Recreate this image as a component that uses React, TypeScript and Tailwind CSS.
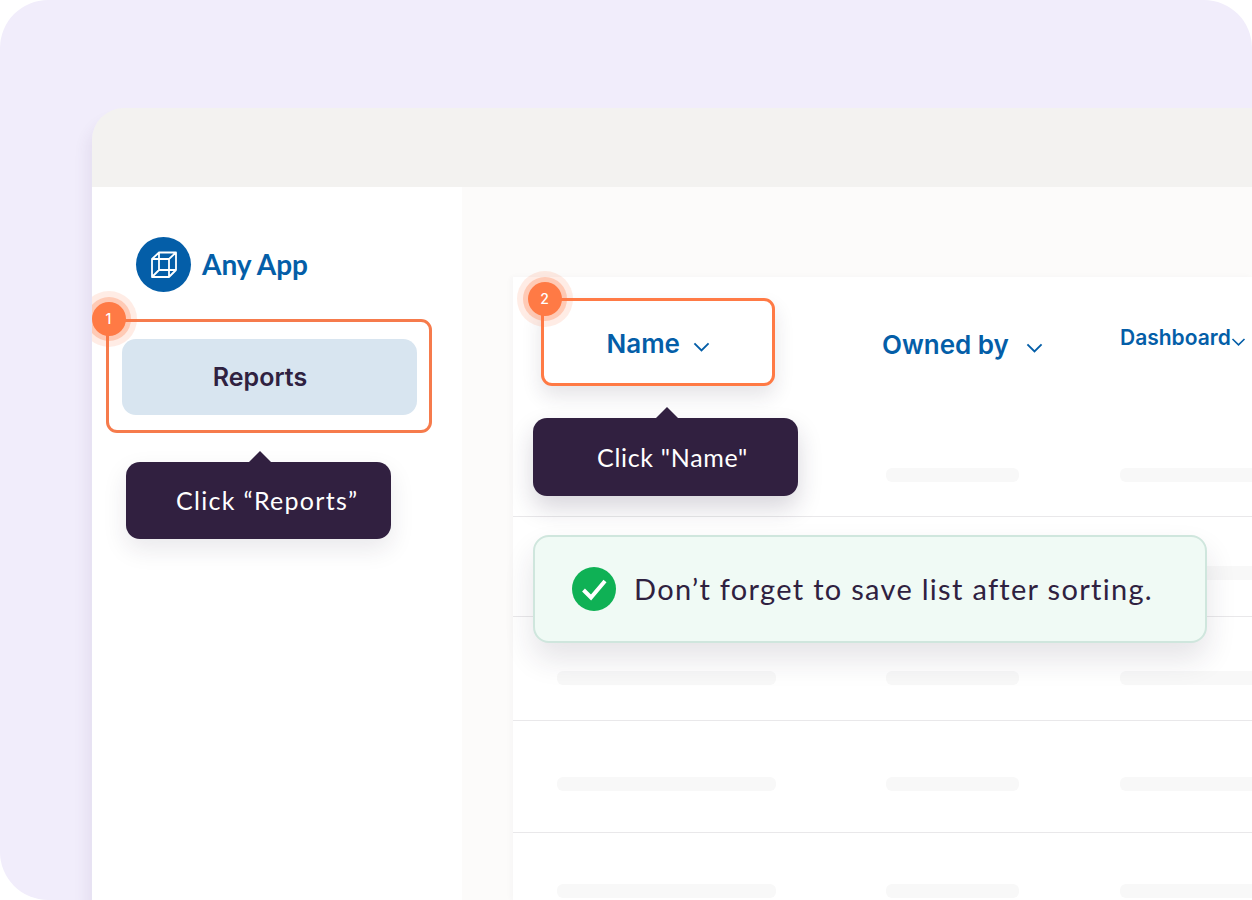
const rows = [
  { height: 'h-[104px]', top: 'pt-[56px]', first: false },
  { height: 'h-[100px]', top: 'pt-[49px]', first: true },
  { height: 'h-[104px]', top: 'pt-[54px]', first: true },
  { height: 'h-[112px]', top: 'pt-[56px]', first: true },
  { height: 'h-[68px]', top: 'pt-[51px]', first: true },
];

function Badge({ n, className }: { n: number; className: string }) {
  return (
    <div
      className={`absolute flex h-[34px] w-[34px] items-center justify-center rounded-full bg-[#ff7a45] text-[14px] font-medium text-white shadow-[0_0_0_5px_rgba(255,122,69,0.3),0_0_0_11px_rgba(255,122,69,0.14)] ${className}`}
    >
      {n}
    </div>
  );
}

function Tooltip({ text, className }: { text: string; className: string }) {
  return (
    <div
      className={`flex w-[265px] items-center rounded-[14px] bg-[#312040] font-['Lato',sans-serif] text-[25px] text-white ${className}`}
    >
      <span className="absolute left-[122px] top-[-11px] h-0 w-0 border-x-[12px] border-b-[12px] border-x-transparent border-b-[#312040]" />
      {text}
    </div>
  );
}

function Chevron({ className }: { className: string }) {
  return (
    <svg viewBox="0 0 18 10" fill="none" stroke="#045ea8" strokeWidth="2" className={className}>
      <path d="M1.5 1.2 9 8.6l7.5-7.4" />
    </svg>
  );
}

export default function App() {
  return (
    <div className="h-[900px] w-[1252px] overflow-hidden bg-white font-['Inter',sans-serif]">
      <div className="h-full rounded-[48px] bg-[#f1edfb] pl-[92px] pt-[108px]">
        <div className="flex h-[792px] flex-col overflow-hidden rounded-tl-[32px] shadow-[-6px_12px_14px_rgba(80,60,120,0.07)]">
          <div className="h-[79px] shrink-0 bg-[#f3f2f0]" />
          <div className="flex flex-1">
            {/* sidebar */}
            <div className="w-[370px] shrink-0 bg-white pl-[14px] pt-[50px]">
              <div className="ml-[30px] flex items-center gap-[11px]">
                <div className="flex h-[55px] w-[55px] items-center justify-center rounded-full bg-[#045ea8]">
                  <svg viewBox="0 0 28 28" fill="none" stroke="white" strokeWidth="1.8" strokeLinejoin="round" className="h-[28px] w-[28px]">
                    <path d="M2 8h17v18H2zM9 1.500h17V19H9zM2 8l7-6.500M19 8l7-6.500M19 26l7-7M2 26l7-7" />
                  </svg>
                </div>
                <span className="mb-[2px] font-['Lato',sans-serif] text-[28px] font-bold text-[#045ea8]">Any App</span>
              </div>
              <div className="relative mt-[27px] h-[114px] w-[326px] rounded-[11px] border-[3.5px] border-[#f67b4c] px-[12.5px] pt-[16.5px]">
                <Badge n={1} className="left-[-17.5px] top-[-20.5px]" />
                <div className="flex h-[76px] items-center justify-center rounded-[14px] bg-[#d8e5f0] pr-[18px] pt-[2px] text-[25px] font-semibold text-[#2f2140]">
                  Reports
                </div>
              </div>
              <Tooltip
                text="Click “Reports”"
                className="relative ml-[20px] mt-[29px] h-[77px] pl-[50px] pt-[1px] tracking-[1.3px] shadow-[0_10px_24px_rgba(40,30,60,0.1)]"
              />
            </div>

            {/* list */}
            <div className="flex-1 bg-[#fcfbfa] pl-[51px] pt-[90px]">
              <div className="relative h-full bg-white shadow-[-2px_0_6px_rgba(60,50,80,0.03)]">
                <div className="flex h-[135px] items-start pl-[28px] pt-[21px] text-[#045ea8]">
                  <div className="relative flex h-[88px] w-[234px] shrink-0 items-center rounded-[11px] border-[3.5px] border-[#ff7a45] bg-white pl-[62.5px] pt-[2px] shadow-[0_10px_20px_rgba(40,30,60,0.12)]">
                    <Badge n={2} className="left-[-16.5px] top-[-19.5px]" />
                    <span className="text-[26px] font-semibold">Name</span>
                    <Chevron className="ml-[13px] mt-[7px] h-[10px] w-[17px]" />
                  </div>
                  <div className="ml-[107px] mt-[27px] flex w-[238px] shrink-0 items-center">
                    <span className="text-[26px] font-semibold">Owned by</span>
                    <Chevron className="ml-[17px] mt-[6px] h-[10px] w-[17px]" />
                  </div>
                  <div className="mt-[24px] flex items-center">
                    <span className="text-[21px] font-semibold">Dashboard</span>
                    <Chevron className="mt-[8px] h-[8px] w-[15px]" />
                  </div>
                </div>

                {rows.map((row, i) => (
                  <div
                    key={i}
                    className={`grid grid-cols-[329px_234px_1fr] pl-[44px] ${row.height} ${row.top} ${row.first ? 'border-t border-[#e9e8ea]' : ''}`}
                  >
                    <div className="h-[14px] w-[219px] rounded-[6px] bg-[#f8f8f8]" />
                    <div className="h-[14px] w-[133px] rounded-[6px] bg-[#f8f8f8]" />
                    <div className="h-[14px] rounded-l-[6px] bg-[#f8f8f8]" />
                  </div>
                ))}

                <Tooltip
                  text="Click &quot;Name&quot;"
                  className="absolute left-[20px] top-[141px] h-[78px] pl-[64px] pt-[2px] tracking-[0.7px] shadow-[0_12px_24px_rgba(40,30,60,0.18)]"
                />

                <div className="absolute left-[20px] top-[258px] flex h-[108px] w-[674px] items-center gap-[18px] rounded-[16px] border-2 border-[#cfe6dd] bg-[#f0faf5] pl-[37px] shadow-[0_16px_30px_rgba(40,30,60,0.12)]">
                  <svg viewBox="0 0 44 44" className="h-[44px] w-[44px] shrink-0">
                    <circle cx="22" cy="22" r="22" fill="#0fb155" />
                    <path d="M11.500 23l7.500 7.500L33 14" fill="none" stroke="white" strokeWidth="4" />
                  </svg>
                  <span className="font-['Lato',sans-serif] text-[29px] tracking-[1.3px] text-[#2f2140]">
                    Don’t forget to save list after sorting.
                  </span>
                </div>
              </div>
            </div>
          </div>
        </div>
      </div>
    </div>
  );
}
